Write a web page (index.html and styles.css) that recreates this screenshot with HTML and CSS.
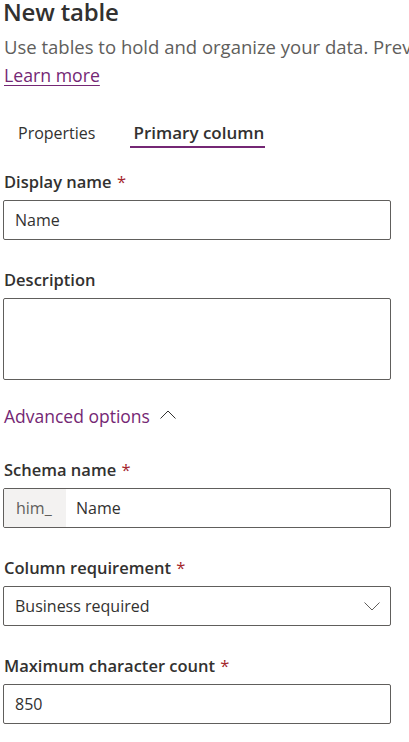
FILE: index.html
```html
<!DOCTYPE html>
<html lang="en">
<head>
<meta charset="utf-8">
<title>New table</title>
<link rel="stylesheet" href="styles.css">
</head>
<body>
<div class="page">
  <h1 class="title">New table</h1>
  <p class="subtitle">Use tables to hold and organize your data. Previously called entities.</p>
  <a class="link" href="#">Learn more</a>

  <div class="tabs">
    <span class="tab">Properties</span>
    <span class="tab active">Primary column</span>
  </div>

  <div class="field first">
    <div class="label">Display name <span class="req">*</span></div>
    <div class="input"><span class="value">Name</span></div>
  </div>

  <div class="field">
    <div class="label">Description</div>
    <div class="input textarea"></div>
  </div>

  <div class="advanced">
    <span>Advanced options</span>
    <svg class="chev-up" width="16" height="10" viewBox="0 0 16 10"><path d="M0.5 9.5 L8 2 L15.5 9.5" fill="none" stroke="#323130" stroke-width="1"/></svg>
  </div>

  <div class="field schema">
    <div class="label">Schema name <span class="req">*</span></div>
    <div class="input prefixed"><span class="prefix">him_</span><span class="value">Name</span></div>
  </div>

  <div class="field">
    <div class="label">Column requirement <span class="req">*</span></div>
    <div class="input dropdown"><span class="value">Business required</span>
      <svg class="chev-down" width="16" height="9" viewBox="0 0 16 9"><path d="M0.5 0.5 L8 8 L15.5 0.5" fill="none" stroke="#605e5c" stroke-width="1"/></svg>
    </div>
  </div>

  <div class="field">
    <div class="label">Maximum character count <span class="req">*</span></div>
    <div class="input"><span class="value">850</span></div>
  </div>
</div>
</body>
</html>
```

FILE: styles.css
```css
html, body {
  margin: 0;
  padding: 0;
  background: #ffffff;
  overflow: hidden;
}

body {
  font-family: "Open Sans", "Noto Sans", "Liberation Sans", sans-serif;
  color: #323130;
}

.page {
  width: 388px;
  padding: 0 0 0 3px;
}

.title {
  margin: 0;
  font-size: 24px;
  font-weight: 600;
  line-height: 24px;
  color: #323130;
  letter-spacing: -0.2px;
}

.subtitle {
  margin: 11px 0 0 1px;
  font-size: 18.5px;
  line-height: 24px;
  color: #605e5c;
  white-space: nowrap;
  overflow: hidden;
  width: 405px;
}

.link {
  display: inline-block;
  margin: 4px 0 0 1px;
  font-size: 17.7px;
  line-height: 24px;
  color: #742774;
  text-decoration: underline;
  text-underline-offset: 3px;
  text-decoration-thickness: 1px;
}

.tabs {
  display: flex;
  align-items: flex-end;
  margin-top: 34px;
  padding-left: 12px;
}

.tab {
  font-size: 16px;
  line-height: 24px;
  padding: 0 1px 1px 3px;
  border-bottom: 2px solid transparent;
  color: #323130;
}

.tab.active {
  margin-left: 34px;
  font-size: 17px;
  font-weight: 600;
  border-bottom-color: #742774;
}

.field {
  margin-top: 28px;
}

.field.first {
  margin-top: 22px;
}

.field.schema {
  margin-top: 30px;
}

.label {
  font-size: 16.5px;
  font-weight: 600;
  line-height: 24px;
  padding-left: 1px;
  color: #323130;
}

.req {
  color: #a4262c;
  font-weight: 400;
  margin-left: 1px;
}

.input {
  margin-top: 6px;
  height: 40px;
  box-sizing: border-box;
  border: 1px solid #605e5c;
  border-radius: 2px;
  display: flex;
  align-items: center;
  font-size: 16px;
  color: #323130;
  overflow: hidden;
}

.input .value {
  padding-left: 11px;
}

.textarea {
  height: 82px;
}

.prefixed .prefix {
  align-self: stretch;
  display: flex;
  align-items: center;
  background: #f3f2f1;
  color: #605e5c;
  padding: 0 12px 0 12px;
  width: 62px;
  box-sizing: border-box;
}

.prefixed .value {
  padding-left: 10px;
}

.dropdown {
  justify-content: space-between;
}

.chev-down {
  margin-right: 10px;
}

.advanced {
  margin-top: 24px;
  display: flex;
  align-items: center;
  gap: 10px;
  font-size: 17.5px;
  line-height: 24px;
  color: #742774;
  padding-left: 1px;
}

.chev-up {
  margin-top: -4px;
}
```
